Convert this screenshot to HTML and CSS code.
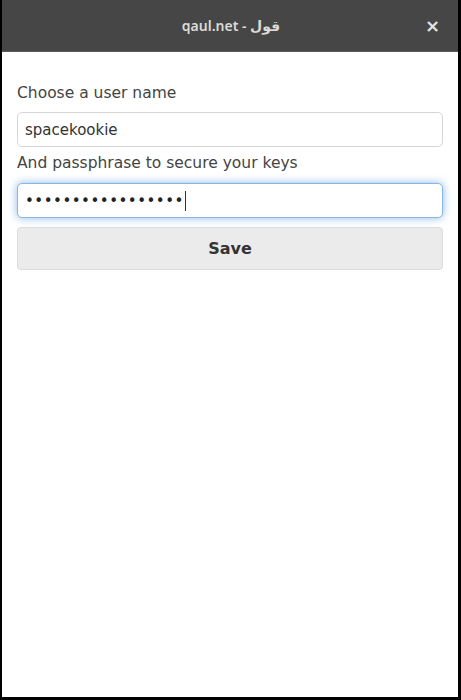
FILE: index.html
```html
<!DOCTYPE html>
<html lang="en">
<head>
<meta charset="utf-8">
<title>qaul.net</title>
<link rel="stylesheet" href="styles.css">
</head>
<body>
<div class="window">
  <header class="titlebar">
    <span class="title">qaul.net - <span dir="rtl" lang="ar">قول</span></span>
    <span class="close">×</span>
  </header>
  <main class="content">
    <label class="label" for="user">Choose a user name</label>
    <input class="field" id="user" type="text" value="spacekookie">
    <label class="label label-second">And passphrase to secure your keys</label>
    <div class="field field-focus"><span class="dots">•••••••••••••••••</span><span class="caret"></span></div>
    <button class="btn" type="button">Save</button>
  </main>
</div>
</body>
</html>
```

FILE: styles.css
```css
html, body {
  margin: 0;
  padding: 0;
  background: #000;
  height: 100%;
}
.window {
  box-sizing: border-box;
  height: 700px;
  width: 461px;
  border-left: 2px solid #000;
  border-right: 3px solid #000;
  border-bottom: 3px solid #000;
  background: #fff;
  display: flex;
  flex-direction: column;
}
.titlebar {
  height: 51px;
  background: #464646;
  border-bottom: 1px solid #5c5c5c;
  display: flex;
  align-items: center;
  justify-content: center;
  position: relative;
  font-family: "Noto Sans", "DejaVu Sans", sans-serif;
}
.title {
  color: #dcdad4;
  font-size: 14px;
  font-weight: 600;
  margin-left: 2px;
}
.close {
  position: absolute;
  right: 18px;
  top: 15px;
  color: #e2e2e2;
  font-family: "DejaVu Sans", sans-serif;
  font-size: 18px;
  font-weight: bold;
}
.content {
  padding: 31px 15px 0 15px;
  display: flex;
  flex-direction: column;
  font-family: "DejaVu Sans", sans-serif;
}
.label {
  font-size: 15.5px;
  line-height: 20px;
  color: #444;
  margin-bottom: 9px;
}
.label-second {
  margin-top: 6px;
  margin-bottom: 10px;
}
.field {
  box-sizing: border-box;
  height: 35px;
  width: 100%;
  border: 1px solid #d6d6d6;
  border-radius: 5px;
  padding: 0 7px;
  font-family: "DejaVu Sans", sans-serif;
  font-size: 15px;
  color: #333;
  background: #fff;
  outline: none;
  margin: 0;
}
.field-focus {
  border-color: #86b8e6;
  box-shadow: 0 0 8px rgba(102, 160, 225, 0.75);
  display: flex;
  align-items: center;
}
.dots {
  color: #222;
  letter-spacing: 0.5px;
  line-height: 20px;
}
.caret {
  display: inline-block;
  width: 1px;
  height: 20px;
  background: #333;
  margin-left: 1px;
}
.btn {
  margin-top: 9px;
  height: 43px;
  width: 100%;
  border: 1px solid #dcdcdc;
  border-radius: 4px;
  background: #ebebeb;
  font-family: "DejaVu Sans", sans-serif;
  font-size: 16px;
  font-weight: bold;
  color: #333;
}
```
